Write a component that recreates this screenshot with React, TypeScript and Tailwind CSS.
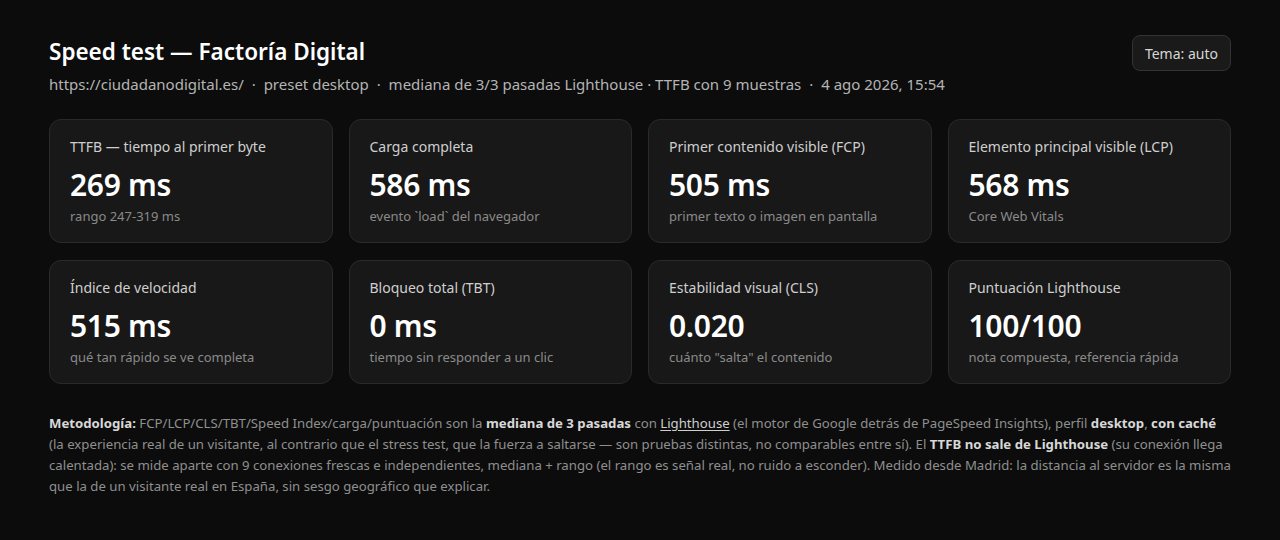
import React from "react";

type Metric = { label: string; value: string; note: string };

const metrics: Metric[] = [
  { label: "TTFB — tiempo al primer byte", value: "269 ms", note: "rango 247-319 ms" },
  { label: "Carga completa", value: "586 ms", note: "evento `load` del navegador" },
  { label: "Primer contenido visible (FCP)", value: "505 ms", note: "primer texto o imagen en pantalla" },
  { label: "Elemento principal visible (LCP)", value: "568 ms", note: "Core Web Vitals" },
  { label: "Índice de velocidad", value: "515 ms", note: "qué tan rápido se ve completa" },
  { label: "Bloqueo total (TBT)", value: "0 ms", note: "tiempo sin responder a un clic" },
  { label: "Estabilidad visual (CLS)", value: "0.020", note: "cuánto \"salta\" el contenido" },
  { label: "Puntuación Lighthouse", value: "100/100", note: "nota compuesta, referencia rápida" },
];

const MetricCard = ({ label, value, note }: Metric) => (
  <div className="rounded-xl border border-[#2a2a2a] bg-[#181818] px-5 pt-[17px] pb-4">
    <p className="text-[14px] leading-5 text-[#cfcfcf]">{label}</p>
    <p className="mt-[10px] text-[30px] leading-9 font-semibold tracking-[-0.3px] text-white">{value}</p>
    <p className="mt-[3px] text-[13px] leading-5 text-[#8a8a8a]">{note}</p>
  </div>
);

export default function App() {
  return (
    <div
      className="min-h-[540px] bg-[#0c0c0c] px-[49px] pt-[36px] pb-8"
      style={{ fontFamily: '"Segoe UI", "Noto Sans", "Open Sans", sans-serif' }}
    >
      {/* cabecera */}
      <div className="flex items-start justify-between">
        <div>
          <h1 className="text-[22.5px] leading-8 font-semibold text-white">
            Speed test — Factoría Digital
          </h1>
          <p className="mt-[6px] text-[15px] leading-5 text-[#b4b4b4]">
            https://ciudadanodigital.es/ <span className="mx-[4px]">·</span> preset desktop{" "}
            <span className="mx-[4px]">·</span> mediana de 3/3 pasadas Lighthouse · TTFB con 9 muestras{" "}
            <span className="mx-[4px]">·</span> 4 ago 2026, 15:54
          </p>
        </div>
        <button className="mt-[-1px] h-9 rounded-lg border border-[#333333] bg-[#1a1a1a] px-3 text-[14px] text-[#d6d6d6]">
          Tema: auto
        </button>
      </div>

      {/* métricas */}
      <div className="mt-[25px] grid grid-cols-4 gap-x-4 gap-y-[17px]">
        {metrics.map((m, i) => (
          <MetricCard key={i} {...m} />
        ))}
      </div>

      {/* metodología */}
      <p className="mt-[29px] text-[13.2px] leading-[21px] text-[#8f8f8f]">
        <b className="font-bold text-[#d8d8d8]">Metodología:</b> FCP/LCP/CLS/TBT/Speed Index/carga/puntuación son la{" "}
        <b className="font-bold text-[#d8d8d8]">mediana de 3 pasadas</b> con{" "}
        <span className="text-[#cfcfcf] underline underline-offset-2">Lighthouse</span> (el motor de Google detrás de
        PageSpeed Insights), perfil <b className="font-bold text-[#d8d8d8]">desktop</b>,{" "}
        <b className="font-bold text-[#d8d8d8]">con caché</b> (la experiencia real de un visitante, al contrario que el
        stress test, que la fuerza a saltarse — son pruebas distintas, no comparables entre sí). El{" "}
        <b className="font-bold text-[#d8d8d8]">TTFB no sale de Lighthouse</b> (su conexión llega calentada): se mide
        aparte con 9 conexiones frescas e independientes, mediana + rango (el rango es señal real, no ruido a esconder).
        Medido desde Madrid: la distancia al servidor es la misma que la de un visitante real en España, sin sesgo
        geográfico que explicar.
      </p>
    </div>
  );
}
